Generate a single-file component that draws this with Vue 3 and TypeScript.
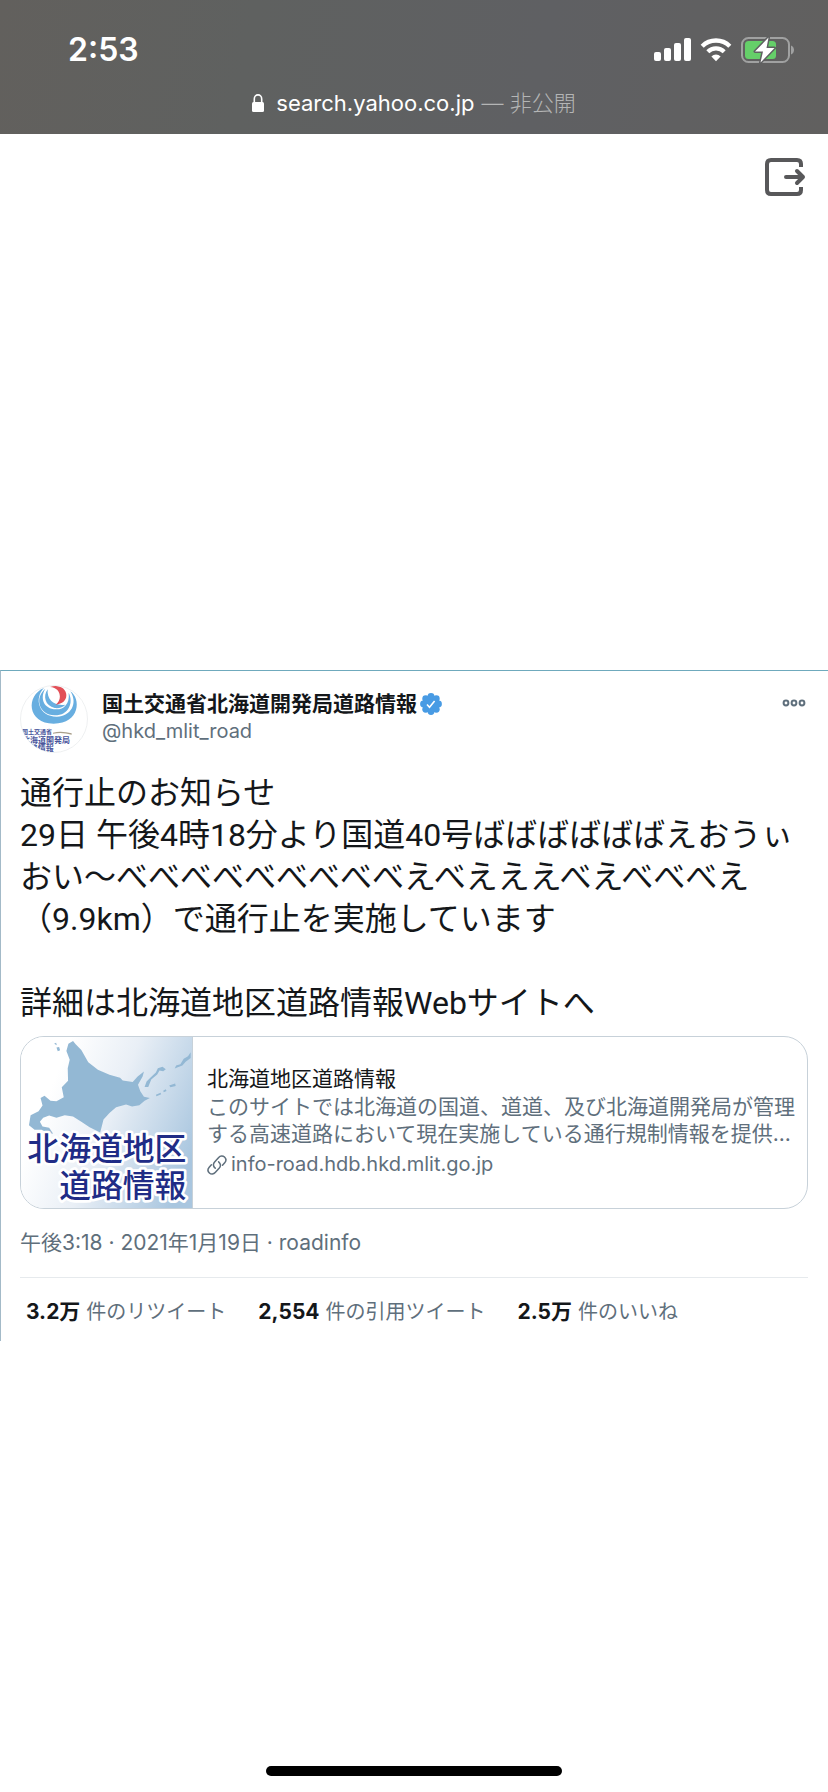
<script setup lang="ts">
interface Stat {
  count: string
  label: string
}

const lines: string[] = [
  '通行止のお知らせ',
  '29日 午後4時18分より国道40号ばばばばばばえおうぃ',
  'おい〜べべべべべべべべべえべえええべえべべべえ',
  '（9.9km）で通行止を実施しています',
  '',
  '詳細は北海道地区道路情報Webサイトへ',
]

const stats: Stat[] = [
  { count: '3.2万', label: '件のリツイート' },
  { count: '2,554', label: '件の引用ツイート' },
  { count: '2.5万', label: '件のいいね' },
]
</script>

<template>
  <div class="page">
    <header class="chrome">
      <div class="status">
        <time class="clock">2:53</time>
        <div class="indicators">
          <svg width="37" height="24" viewBox="0 0 37 24" fill="#fff" aria-hidden="true">
            <rect x="0" y="14" width="7" height="9" rx="2" />
            <rect x="10" y="10" width="7" height="13" rx="2" />
            <rect x="20" y="5" width="7" height="18" rx="2" />
            <rect x="30" y="0" width="7" height="23" rx="2" />
          </svg>
          <svg width="32" height="24" viewBox="0 0 32 24" aria-hidden="true">
            <path d="M2.2 8.2a19.6 19.6 0 0 1 27.6 0" fill="none" stroke="#fff" stroke-width="4.4" />
            <path d="M7.8 13.8a11.7 11.7 0 0 1 16.4 0" fill="none" stroke="#fff" stroke-width="4.2" />
            <path d="M11.4 18.4a6.6 6.6 0 0 1 9.2 0L16 23.2z" fill="#fff" />
          </svg>
          <svg width="54" height="28" viewBox="0 0 54 28" aria-hidden="true">
            <rect x="1" y="2" width="47" height="24" rx="6.5" fill="none" stroke="#a0a1a1" stroke-width="2" />
            <path d="M50 9.5c4 1.600 4 7.400 0 9z" fill="#a0a1a1" />
            <rect x="4" y="5" width="31" height="18" rx="3.500" fill="#65cf69" />
            <path d="M27.500 1.500 14 15.500h8l-2.500 11L33.500 12h-8z" fill="#fff" stroke="#5f6061" stroke-width="3" stroke-linejoin="round" paint-order="stroke" />
          </svg>
        </div>
      </div>
      <div class="address">
        <svg width="12" height="18" viewBox="0 0 12 18" aria-hidden="true">
          <rect x="0" y="8" width="12" height="10" rx="1.5" fill="#fff" />
          <path d="M2.300 9V5a3.700 4.100 0 0 1 7.400 0v4" fill="none" stroke="#fff" stroke-width="1.600" />
        </svg>
        <span class="host">search.yahoo.co.jp</span>
        <span class="private">— 非公開</span>
      </div>
    </header>

    <main>
      <div class="toolbar">
        <button type="button" class="exit" aria-label="閉じる">
          <svg width="41" height="38" viewBox="0 0 41 38" fill="none" stroke="#58585a" stroke-width="4" aria-hidden="true">
            <path d="M36 9V6q0-4-4-4H6Q2 2 2 6v26q0 4 4 4h26q4 0 4-4v-3" />
            <path d="M21 19h17M32 13l6 6-6 6" stroke-linecap="round" stroke-linejoin="round" />
          </svg>
        </button>
      </div>

      <article class="tweet">
        <div class="author">
          <svg class="avatar" width="68" height="68" viewBox="61 45 204 204" role="img" aria-label="国土交通省北海道開発局">
            <defs><clipPath id="disc"><circle cx="163" cy="147" r="100" /></clipPath></defs>
            <circle cx="163" cy="147" r="100.500" fill="#fff" stroke="#e6e8ea" stroke-width="2" />
            <g clip-path="url(#disc)">
              <path d="M133 54C78 76 82 161 162 161C242 161 244 85 212 64C236 101 213 139 172 140C119 141 101 86 133 54Z" fill="#68aee0" />
              <path d="M137 56C104 83 117 134 165 136C209 136 222 96 207 68C211 103 191 119 169 118C132 117 120 84 137 56Z" fill="#68aee0" />
              <path d="M144 58C129 78 136 108 165 114C178 116 190 111 197 104C165 109 141 91 144 58Z" fill="#68aee0" />
              <path d="M151 51C176 41 201 55 200 76C200 92 188 102 168 104C189 88 184 53 151 51Z" fill="#e25058" />
              <path d="M160 188Q185 181 216 190L216 194Q188 186 160 191Z" fill="#a99f8b" />
              <text class="mark" fill="#49569c">
                <tspan x="67" y="193" font-size="18">国土交通省</tspan>
                <tspan x="67" y="219" font-size="24">北海道開発局</tspan>
                <tspan x="90" y="243" font-size="24">路情報</tspan>
              </text>
            </g>
          </svg>
          <div class="who">
            <div class="name">
              <span>国土交通省北海道開発局道路情報</span>
              <svg width="22" height="22" viewBox="0 0 22 22" role="img" aria-label="認証済み">
                <g fill="#489be4">
                  <circle cx="11" cy="11" r="8.500" />
                  <circle cx="11" cy="3.500" r="3.400" /><circle cx="16.300" cy="5.700" r="3.400" />
                  <circle cx="18.500" cy="11" r="3.400" /><circle cx="16.300" cy="16.300" r="3.400" />
                  <circle cx="11" cy="18.500" r="3.400" /><circle cx="5.700" cy="16.300" r="3.400" />
                  <circle cx="3.500" cy="11" r="3.400" /><circle cx="5.700" cy="5.700" r="3.400" />
                </g>
                <path d="m7 11.500 2.500 2.700L14.600 8" fill="none" stroke="#fff" stroke-width="1.600" />
              </svg>
            </div>
            <div class="handle">@hkd_mlit_road</div>
          </div>
          <button type="button" class="more" aria-label="もっと見る">
            <svg width="24" height="8" viewBox="0 0 24 8" fill="none" stroke="#5f6f7c" stroke-width="2" aria-hidden="true">
              <circle cx="4" cy="4" r="2.400" /><circle cx="12" cy="4" r="2.400" /><circle cx="20" cy="4" r="2.400" />
            </svg>
          </button>
        </div>

        <div class="body">
          <p v-for="(line, i) in lines" :key="i">{{ line }}</p>
        </div>

        <a class="card" href="#">
          <svg class="thumb" viewBox="33 36 516 516" role="img" aria-label="北海道の地図">
            <defs>
              <linearGradient id="sea" x1="0" y1="0.300" x2="1" y2="0.700">
                <stop offset="0.150" stop-color="#fff" />
                <stop offset="0.500" stop-color="#e9eff6" />
                <stop offset="1" stop-color="#a9c6df" />
              </linearGradient>
            </defs>
            <rect x="33" y="36" width="516" height="516" fill="url(#sea)" />
            <g fill="#93b8d4">
              <path d="M190 48L198 58L215 75L236 112L265 135L300 150L332 159L340 167L370 172L385 155L404 140L400 155L386 180L393 200L404 216L422 220L406 228L390 242L368 246L350 240L320 248L300 265L282 285L272 324L240 308L215 292L190 276L165 272L140 280L118 273L100 280L90 292L98 306L118 310L130 328L112 324L95 316L74 316L57 302L62 272L86 260L98 243L92 220L104 213L122 228L140 230L162 218L156 188L175 168L174 130L180 105L170 78L176 56Z" />
              <path d="M140 68l8-2 3 10-7 3zM133 56l6-3 2 8zM406 187L412 170L424 158L440 143L446 130L460 126L470 133L462 139L451 137L444 149L426 164L417 187ZM497 131L501 122L514 118L524 102L537 94L545 82V99L530 111L520 122L506 127ZM480 182l18-6 2 8-16 4zM440 210l14-6 2 5-14 6zM462 198l8-4 2 5-8 4z" />
            </g>
            <text class="title-art" font-size="96" text-anchor="end">
              <tspan x="532" y="407">北海道地区</tspan>
              <tspan x="532" y="518">道路情報</tspan>
            </text>
          </svg>
          <div class="summary">
            <div class="headline">北海道地区道路情報</div>
            <div class="desc">このサイトでは北海道の国道、道道、及び北海道開発局が管理<br>する高速道路において現在実施している通行規制情報を提供...</div>
            <div class="link">
              <svg width="20" height="22" viewBox="0 0 20 22" fill="none" stroke="#5f6f7c" stroke-width="1.500" stroke-linecap="round" aria-hidden="true">
                <path d="M8.200 14.200C6 12.400 5.900 9.900 7.600 8L11.700 3.400C13.300 1.600 15.800 1.400 17.500 3S19.200 7 17.700 8.700L15.500 11.200" />
                <path d="M11.600 7.800C13.800 9.600 14 12 12.300 14L8.200 18.600C6.600 20.400 4.100 20.600 2.400 19S.7 15 2.200 13.300L4.400 10.800" />
              </svg>
              <span>info-road.hdb.hkd.mlit.go.jp</span>
            </div>
          </div>
        </a>

        <div class="meta">午後3:18 · 2021年1月19日 · roadinfo</div>

        <div class="stats">
          <div v-for="s in stats" :key="s.label" class="stat">
            <strong>{{ s.count }}</strong><span>{{ s.label }}</span>
          </div>
        </div>
      </article>
    </main>

    <div class="home"></div>
  </div>
</template>

<style>
body {
  margin: 0;
  background: #fff;
}
</style>

<style scoped>
.page {
  min-height: 100vh;
  display: flex;
  flex-direction: column;
  box-sizing: border-box;
  padding-bottom: 16px;
  font-family: Inter, "Noto Sans CJK JP", sans-serif;
  color: #14171a;
}
main {
  flex: 1;
}
button {
  padding: 0;
  border: 0;
  background: none;
  display: flex;
}
svg {
  display: block;
  flex: none;
}
.chrome {
  height: 134px;
  background: linear-gradient(100deg, #62605d 0%, #5f6160 30%, #5f6063 65%, #61605f 100%);
  color: #fff;
}
.status {
  display: flex;
  justify-content: space-between;
  align-items: center;
  padding: 30px 33px 0 68px;
  height: 40px;
}
.clock {
  font-size: 32px;
  font-weight: 600;
  line-height: 40px;
}
.indicators {
  display: flex;
  align-items: center;
  gap: 9px;
}
.address {
  display: flex;
  justify-content: center;
  align-items: center;
  height: 32px;
  margin-top: 17px;
  font-size: 22px;
  line-height: 32px;
}
.host {
  margin-left: 12px;
}
.private {
  margin-left: 7px;
  font-weight: 300;
  color: #b4b5b5;
}
.toolbar {
  display: flex;
  justify-content: flex-end;
  padding: 24px 22px 0 0;
  height: 512px;
}
.tweet {
  border-top: 1px solid #6faabd;
  border-left: 1px solid #a3bac8;
  padding: 14px 20px 14px 19px;
}
.author {
  display: flex;
}
.who {
  flex: 1;
  margin-left: 14px;
  padding-top: 4px;
}
.name {
  display: flex;
  align-items: center;
  gap: 3px;
  font-size: 21px;
  font-weight: 700;
  line-height: 30px;
}
.handle {
  font-size: 20px;
  line-height: 24px;
  color: #5f6f7c;
}
.more {
  align-self: flex-start;
  padding: 14px 2px 10px;
}
.mark {
  font-family: "Noto Sans CJK JP", sans-serif;
  font-weight: 700;
}
.body {
  margin-top: 19px;
  font-family: Roboto, "Noto Sans CJK JP", sans-serif;
  font-size: 32px;
  line-height: 42px;
  white-space: nowrap;
}
.body p {
  margin: 0;
  height: 42px;
}
.card {
  display: flex;
  margin-top: 12px;
  border: 1px solid #c7d1d9;
  border-radius: 24px;
  overflow: hidden;
  color: inherit;
  text-decoration: none;
}
.thumb {
  width: 171px;
  height: 171px;
  border-right: 1px solid #c7d1d9;
}
.title-art {
  font-family: "Noto Sans CJK JP", sans-serif;
  font-weight: 500;
  fill: #202c86;
  stroke: #fff;
  stroke-width: 16px;
  stroke-linejoin: round;
  paint-order: stroke;
}
.summary {
  flex: 1;
  min-width: 0;
  padding: 28px 0 0 14px;
  font-size: 21px;
  line-height: 27px;
  white-space: nowrap;
}
.desc {
  color: #5f6f7c;
  margin-top: 1px;
}
.link {
  display: flex;
  align-items: center;
  gap: 4px;
  margin-top: 4px;
  font-size: 20px;
  color: #5f6f7c;
}
.meta {
  margin-top: 19px;
  padding-bottom: 19px;
  font-size: 21px;
  line-height: 30px;
  color: #5f6f7c;
  border-bottom: 1px solid #e6eaed;
}
.stats {
  display: flex;
  gap: 32px;
  padding: 19px 6px 0;
  font-size: 21px;
  line-height: 30px;
  white-space: nowrap;
}
.stat {
  display: flex;
  gap: 6px;
}
.stat span {
  font-size: 20px;
  color: #5f6f7c;
}
.home {
  width: 296px;
  height: 10px;
  margin: 0 auto;
  border-radius: 5px;
  background: #000;
}
</style>
